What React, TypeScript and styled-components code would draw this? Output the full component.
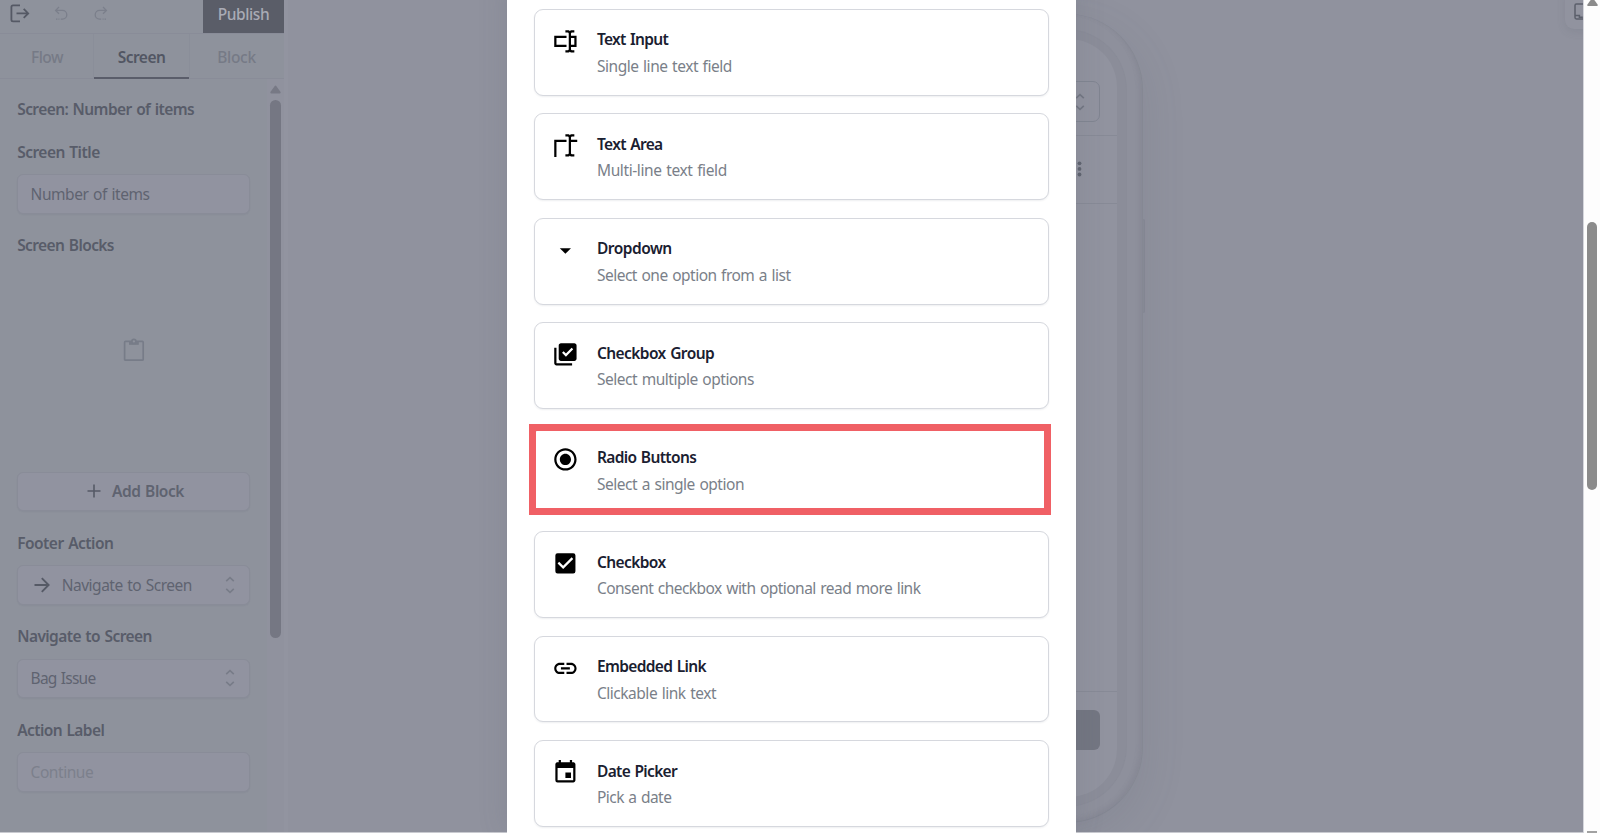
import React from "react";
import styled, { createGlobalStyle } from "styled-components";
import {
  MdArrowDropDown,
  MdLibraryAddCheck,
  MdRadioButtonChecked,
  MdCheckBox,
  MdLink,
  MdEvent,
} from "react-icons/md";

const GlobalStyle = createGlobalStyle`
  * { box-sizing: border-box; }
  html, body { margin: 0; padding: 0; overflow: hidden; background: #c9cad0; }
  body { font-family: "Noto Sans", "Open Sans", sans-serif; font-size: 15.5px; line-height: 22.3px; word-spacing: 1px; }
  svg { display: block; flex: none; }
`;

const Page = styled.div`
  position: relative;
  display: flex;
  width: 1600px;
  height: 833px;
  overflow: hidden;
`;

const Editor = styled.div`
  display: flex;
  width: 1583px;
  height: 832px;
  overflow: hidden;
  background: #90929e;
`;

/* ---------- sidebar ---------- */

const Sidebar = styled.aside`
  display: flex;
  flex-direction: column;
  flex: none;
  width: 284px;
  background: #8e929c;
  color: #585c69;
`;

const Toolbar = styled.div`
  display: flex;
  align-items: center;
  height: 33px;
  flex: none;
  padding-left: 10px;
  color: #7c808c;
`;

const ToolIcon = styled.span<{ $gap?: number; $dark?: boolean }>`
  margin-left: ${(p) => p.$gap ?? 0}px;
  margin-top: -6px;
  color: ${(p) => (p.$dark ? "#555965" : "#7b7f8b")};
`;

const Publish = styled.button`
  margin-left: auto;
  width: 81px;
  height: 33px;
  border: 0;
  padding: 0 0 5px;
  background: #5a5d68;
  color: #a9abb5;
  font: 500 15.5px/22.3px "Noto Sans", "Open Sans", sans-serif;
  letter-spacing: -0.4px;
`;

const Tabs = styled.div`
  display: grid;
  grid-template-columns: 94px 95px 95px;
  height: 46px;
  flex: none;
  border-top: 1px solid #898c98;
  border-bottom: 1px solid #898c98;
`;

const Tab = styled.div<{ $active?: boolean; $track: number }>`
  display: flex;
  justify-content: center;
  padding-top: 12px;
  margin-bottom: -1px;
  font-weight: ${(p) => (p.$active ? 600 : 500)};
  letter-spacing: ${(p) => p.$track}px;
  color: ${(p) => (p.$active ? "#525663" : "#767a86")};
  border-bottom: ${(p) => (p.$active ? "2px solid #5a5d6a" : "0")};
  box-shadow: ${(p) => (p.$active ? "-1px 0 #8a8e99, 1px 0 #8a8e99" : "none")};
`;

const SideBody = styled.div`
  display: flex;
  flex: 1;
  min-height: 0;
`;

const Form = styled.div`
  width: 267px;
  padding: 18.8px 17.2px 0 17.2px;
`;

const Label = styled.div<{ $track?: number }>`
  font-weight: 600;
  letter-spacing: ${(p) => p.$track ?? -0.58}px;
  white-space: nowrap;
`;

const Field = styled.div`
  display: flex;
  flex-direction: column;
  gap: 11.3px;
  margin-top: 20.5px;
`;

const Control = styled.div<{ $muted?: boolean; $center?: boolean; $track?: number }>`
  display: flex;
  align-items: center;
  justify-content: ${(p) => (p.$center ? "center" : "flex-start")};
  height: 39.4px;
  padding: ${(p) => (p.$center ? "0 0 0 3.5px" : "0 13.8px 0 12.4px")};
  border: 1px solid #898c98;
  border-radius: 6px;
  background: #9193a0;
  box-shadow: 0 1px 1px rgba(80, 84, 98, 0.08);
  color: ${(p) => (p.$muted ? "#7c808c" : "#5f6370")};
  font-weight: ${(p) => (p.$center ? 600 : 400)};
  letter-spacing: ${(p) => p.$track ?? -0.44}px;
  white-space: nowrap;
`;

const Grow = styled.span`
  flex: 1;
`;

const Empty = styled.div`
  display: flex;
  justify-content: center;
  height: 204px;
  padding-top: 70px;
  color: #777c88;
`;

const SideScroll = styled.div`
  display: flex;
  flex-direction: column;
  align-items: center;
  width: 17px;
  padding-top: 6px;
  background: #90929e;
  color: #777985;
`;

const SideThumb = styled.div`
  width: 10.6px;
  height: 538px;
  margin-top: 5.5px;
  border-radius: 6px;
  background: #757783;
`;

/* ---------- canvas ---------- */

const Canvas = styled.main`
  position: relative;
  flex: 1;
  border-left: 4px solid #9294a0;
  background: #90929e;
`;

const Phone = styled.div`
  position: absolute;
  left: 440px;
  top: 14px;
  width: 414.5px;
  height: 809px;
  padding: 16px;
  border-radius: 76px;
  background: #8e909c;
  border-right: 1px solid #858893;
  border-bottom: 1px solid #838692;
  box-shadow: inset -3px -2px 4px rgba(90, 94, 108, 0.12), 0 14px 44px rgba(85, 90, 105, 0.14);
`;

const Bezel = styled.div`
  height: 100%;
  padding: 9px;
  border-radius: 60px;
  background: #8b8d99;
  box-shadow: 0 0 0 1px #8a8c98;
`;

const PhoneScreen = styled.div`
  display: flex;
  flex-direction: column;
  height: 100%;
  overflow: hidden;
  border-radius: 48px;
  background: #91939f;
`;

const PhoneTop = styled.div`
  display: flex;
  justify-content: flex-end;
  height: 97px;
  padding: 42.4px 17px 0;
  border-bottom: 1px solid #878a96;
`;

const PhoneSelect = styled.div`
  display: flex;
  align-items: center;
  justify-content: flex-end;
  width: 340px;
  height: 40.5px;
  padding-right: 14px;
  border: 1px solid #808591;
  border-radius: 7px;
  color: #737783;
`;

const PhoneHeader = styled.div`
  display: flex;
  justify-content: flex-end;
  align-items: center;
  height: 68px;
  padding: 0 34.4px 1px 0;
  border-bottom: 1px solid #878a96;
  color: #5f636f;
`;

const PhoneFooter = styled.div`
  height: 106px;
  margin-top: auto;
  padding: 17.5px 17px;
  border-top: 1px solid #878a96;
`;

const PhoneButton = styled.div`
  height: 40.5px;
  border-radius: 6px;
  background: #737682;
`;

const SideKey = styled.div`
  position: absolute;
  left: 854px;
  top: 219px;
  width: 3px;
  height: 94px;
  border-radius: 0 2px 2px 0;
  background: #8b8d99;
  border-right: 1px solid #878a95;
`;

const CornerButton = styled.div`
  position: absolute;
  right: -21px;
  top: -14px;
  width: 39px;
  height: 43px;
  padding: 17px 0 0 9px;
  border-radius: 9px;
  background: #91939f;
  box-shadow: 0 3px 9px rgba(85, 90, 105, 0.14);
  color: #5b5f6b;
`;

/* ---------- dialog ---------- */

const Dialog = styled.section`
  position: absolute;
  left: 507px;
  top: 0;
  display: flex;
  flex-direction: column;
  gap: 17.8px;
  width: 569px;
  height: 833px;
  padding: 9px 27px 0 27px;
  background: #fff;
  overflow: hidden;
`;

const DialogShadow = styled.div`
  position: absolute;
  left: 507px;
  top: -20px;
  width: 569px;
  height: 852px;
  box-shadow: 0 0 28px rgba(80, 85, 102, 0.16);
`;

const Card = styled.article`
  position: relative;
  display: flex;
  gap: 17.9px;
  flex: none;
  height: 86.67px;
  padding: 17.9px 17.9px 0 17.3px;
  border: 1px solid #d6d8de;
  border-radius: 9px;
  background: #fff;
  box-shadow: 0 1px 2px rgba(20, 25, 50, 0.07);
  color: #000;
`;

const CardText = styled.div`
  display: flex;
  flex-direction: column;
  gap: 4.2px;
  padding-top: 0.6px;
`;

const CardTitle = styled.h3<{ $track: number }>`
  margin: 0;
  font-size: 15.5px;
  line-height: 22.3px;
  font-weight: 600;
  color: #1a2030;
  letter-spacing: ${(p) => p.$track}px;
  white-space: nowrap;
`;

const CardNote = styled.p<{ $track: number }>`
  margin: 0;
  color: #7a7f89;
  letter-spacing: ${(p) => p.$track}px;
  white-space: nowrap;
`;

const Highlight = styled.div`
  position: absolute;
  left: -6.4px;
  right: -3.4px;
  top: -3.6px;
  bottom: -2.4px;
  border: 7px solid #f06065;
`;

/* ---------- window scrollbar ---------- */

const Scrollbar = styled.div`
  display: flex;
  flex-direction: column;
  align-items: center;
  width: 17px;
  height: 833px;
  border-left: 1px solid #d5d6dc;
  background: #fdfdfd;
  color: #8b8b8b;
`;

const ScrollThumb = styled.div`
  width: 10.4px;
  height: 267.5px;
  margin-top: 215.5px;
  border-radius: 6px;
  background: #8b8b8b;
`;

const ScrollEnd = styled.div`
  width: 10px;
  height: 2px;
  margin-top: auto;
  background: #a2a2a2;
`;

/* ---------- icons ---------- */

const Triangle = ({ h = 9 }: { h?: number }) => (
  <svg width="11" height={h} viewBox={`0 ${9 - h} 11 ${h}`} fill="currentColor">
    <path d="M4.6 1.2Q5.5 0 6.4 1.2L10.6 7Q11 8.4 9.8 8.6H1.2Q0 8.4.4 7Z" />
  </svg>
);

const Exit = () => (
  <svg width="20" height="19" viewBox="0 0 20 19" fill="none" stroke="currentColor" strokeWidth="1.8">
    <path d="M10 1.4H3Q1.4 1.4 1.4 3v12.8q0 1.6 1.6 1.6h7M6.5 9.4H18M13.7 4.9l4.5 4.5-4.5 4.5" />
  </svg>
);

const Undo = ({ flip }: { flip?: boolean }) => (
  <svg width="14" height="15" viewBox="0 0 14 15" fill="none" stroke="currentColor" strokeWidth="1.3">
    <g transform={flip ? "matrix(-1 0 0 1 14 0)" : undefined}>
      <path d="M5 1L1.6 4.4 5 7.8M1.8 4.4H8.4a4.3 4.3 0 0 1 0 8.8H6.8" />
      <path d="M2 13.2h1.4M4.4 13.2h1" />
    </g>
  </svg>
);

const Clipboard = () => (
  <svg width="22" height="24" viewBox="0 0 22 24" fill="none" stroke="currentColor" strokeWidth="1.7">
    <rect x="1.6" y="3.4" width="18.6" height="18.8" rx="1" />
    <path d="M6 3.4v3.4h9.8V3.4" fill="currentColor" stroke="none" />
    <circle cx="10.9" cy="3.4" r="2" fill="#8e929c" />
  </svg>
);

const Plus = () => (
  <svg width="14" height="14" viewBox="0 0 14 14" stroke="currentColor" strokeWidth="1.6">
    <path d="M7 .5v13M.5 7h13" />
  </svg>
);

const ArrowRight = () => (
  <svg width="16" height="16" viewBox="0 0 16 16" fill="none" stroke="currentColor" strokeWidth="1.9">
    <path d="M.5 8h13.8M7.8 1.2L14.6 8l-6.8 6.8" />
  </svg>
);

const Chevrons = () => (
  <svg width="10" height="18" viewBox="0 0 10 18" fill="none" stroke="currentColor" strokeWidth="1.6">
    <path d="M1.2 5.2L5 1.6l3.8 3.6M1.2 12.8L5 16.4l3.8-3.6" />
  </svg>
);

const Kebab = () => (
  <svg width="5" height="16" viewBox="0 0 5 16" fill="currentColor">
    <circle cx="2.5" cy="2.3" r="1.9" />
    <circle cx="2.5" cy="7.9" r="1.9" />
    <circle cx="2.5" cy="13.5" r="1.9" />
  </svg>
);

const CornerIcon = () => (
  <svg width="18" height="17" viewBox="0 0 18 17" fill="none" stroke="currentColor" strokeWidth="1.5">
    <path d="M18 1H2.4Q1 1 1 2.4v12.2Q1 16 2.4 16H18M1 12.6h4.4v1.6h3.4" />
  </svg>
);

const BEAM =
  "V19A1 1 0 0 0 18 20H20V22H17.5C16.95 22 16 21.55 16 21C16 21.55 15.05 22 14.5 22H12V20H14A1 1 0 0 0 15 19V5A1 1 0 0 0 14 4H12V2H14.5C15.05 2 16 2.45 16 3C16 2.45 16.95 2 17.5 2H20V4H18A1 1 0 0 0 17 5V7";

const TextInputIcon = ({ size }: { size: number }) => (
  <svg width={size} height={size} viewBox="0 0 24 24" fill="currentColor">
    <path d={`M17 7H22V17H17${BEAM}M2 7H13V9H4V15H13V17H2V7M20 15V9H17V15H20Z`} />
  </svg>
);

const TextAreaIcon = ({ size }: { size: number }) => (
  <svg width={size} height={size} viewBox="0 0 24 24" fill="currentColor">
    <path d={`M17 7H22.6V9H17${BEAM}M2 7H13V9H4V22.4H2Z`} />
  </svg>
);

type Block = {
  icon: React.ComponentType<{ size: number }>;
  title: string;
  note: string;
  titleTrack: number;
  noteTrack: number;
  picked?: boolean;
};

const blocks: Block[] = [
  { icon: TextInputIcon, title: "Text Input", note: "Single line text field", titleTrack: -0.7, noteTrack: -0.47 },
  { icon: TextAreaIcon, title: "Text Area", note: "Multi-line text field", titleTrack: -0.66, noteTrack: -0.39 },
  { icon: MdArrowDropDown, title: "Dropdown", note: "Select one option from a list", titleTrack: -0.5, noteTrack: -0.51 },
  { icon: MdLibraryAddCheck, title: "Checkbox Group", note: "Select multiple options", titleTrack: -0.58, noteTrack: -0.48 },
  { icon: MdRadioButtonChecked, title: "Radio Buttons", note: "Select a single option", titleTrack: -0.64, noteTrack: -0.48, picked: true },
  { icon: MdCheckBox, title: "Checkbox", note: "Consent checkbox with optional read more link", titleTrack: -0.6, noteTrack: -0.54 },
  { icon: MdLink, title: "Embedded Link", note: "Clickable link text", titleTrack: -0.64, noteTrack: -0.48 },
  { icon: MdEvent, title: "Date Picker", note: "Pick a date", titleTrack: -0.67, noteTrack: -0.55 },
];

const IconSlot = styled.span<{ $dim?: boolean; $ml?: number; $mr?: number }>`
  margin-left: ${(p) => p.$ml ?? 0}px;
  margin-right: ${(p) => p.$mr ?? 0}px;
  color: ${(p) => (p.$dim ? "#787c88" : "#565a66")};
`;

export default function App() {
  return (
    <Page>
      <GlobalStyle />
      <Editor>
        <Sidebar>
          <Toolbar>
            <ToolIcon $dark><Exit /></ToolIcon>
            <ToolIcon $gap={24}><Undo /></ToolIcon>
            <ToolIcon $gap={26}><Undo flip /></ToolIcon>
            <Publish>Publish</Publish>
          </Toolbar>
          <Tabs>
            <Tab $track={-0.5}>Flow</Tab>
            <Tab $track={-0.5} $active>Screen</Tab>
            <Tab $track={-0.3}>Block</Tab>
          </Tabs>
          <SideBody>
            <Form>
              <Label>Screen: Number of items</Label>
              <Field>
                <Label $track={-0.52}>Screen Title</Label>
                <Control>Number of items</Control>
              </Field>
              <Field>
                <Label $track={-0.6}>Screen Blocks</Label>
                <Empty><Clipboard /></Empty>
              </Field>
              <Control $center $track={-0.45}>
                <IconSlot $mr={11.5}><Plus /></IconSlot>
                Add Block
              </Control>
              <Field>
                <Label $track={-0.52}>Footer Action</Label>
                <Control $track={-0.5}>
                  <IconSlot $ml={3} $mr={12.2}><ArrowRight /></IconSlot>
                  <Grow>Navigate to Screen</Grow>
                  <IconSlot $dim><Chevrons /></IconSlot>
                </Control>
              </Field>
              <Field>
                <Label>Navigate to Screen</Label>
                <Control $track={-0.77}>
                  <Grow>Bag Issue</Grow>
                  <IconSlot $dim><Chevrons /></IconSlot>
                </Control>
              </Field>
              <Field>
                <Label>Action Label</Label>
                <Control $muted>Continue</Control>
              </Field>
            </Form>
            <SideScroll>
              <Triangle />
              <SideThumb />
            </SideScroll>
          </SideBody>
        </Sidebar>
        <Canvas>
          <SideKey />
          <Phone>
            <Bezel>
              <PhoneScreen>
                <PhoneTop>
                  <PhoneSelect><Chevrons /></PhoneSelect>
                </PhoneTop>
                <PhoneHeader><Kebab /></PhoneHeader>
                <PhoneFooter><PhoneButton /></PhoneFooter>
              </PhoneScreen>
            </Bezel>
          </Phone>
          <CornerButton><CornerIcon /></CornerButton>
        </Canvas>
      </Editor>
      <Scrollbar>
        <Triangle h={6.5} />
        <ScrollThumb />
        <ScrollEnd />
      </Scrollbar>
      <DialogShadow />
      <Dialog>
        {blocks.map(({ icon: Icon, ...b }) => (
          <Card key={b.title}>
            <Icon size={26.8} />
            <CardText>
              <CardTitle $track={b.titleTrack}>{b.title}</CardTitle>
              <CardNote $track={b.noteTrack}>{b.note}</CardNote>
            </CardText>
            {b.picked && <Highlight />}
          </Card>
        ))}
      </Dialog>
    </Page>
  );
}
